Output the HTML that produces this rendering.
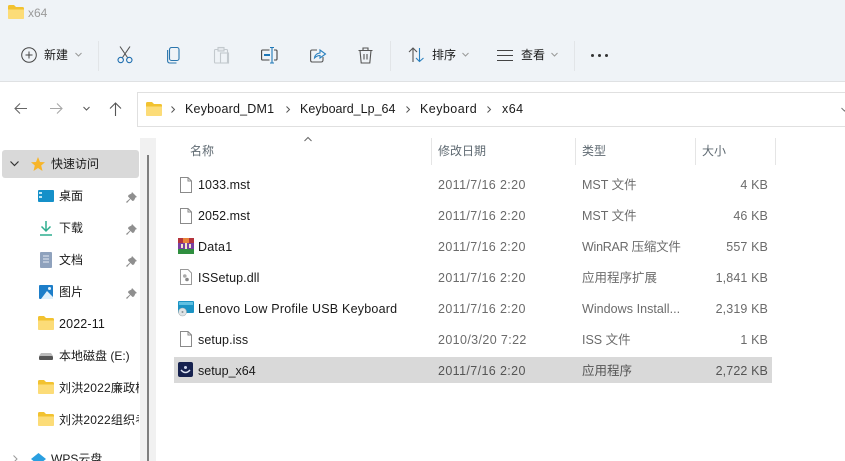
<!DOCTYPE html>
<html><head><meta charset="utf-8">
<style>
html,body{margin:0;padding:0;width:845px;height:461px;overflow:hidden;background:#fff}
body{position:relative;font-family:"Liberation Sans","Noto Sans CJK SC",sans-serif;font-size:12.5px;color:#1a1a1a}
.a{position:absolute;white-space:nowrap;line-height:16px}
svg{position:absolute;overflow:visible}
.g{color:#6b6b6b}
.h{color:#5f6a72}
.t{letter-spacing:.38px}
.s{letter-spacing:.12px}
</style></head><body>
<div class="a" style="left:0;top:0;width:845px;height:81px;background:#eff3f7;border-bottom:1px solid #dfe1e3"></div>
<svg style="left:0;top:0" width="0" height="0"><defs>
<g id="f"><path d="M0 1.500Q0 0 1.500 0H6L8 2H14.500Q16 2 16 3.500V12.500Q16 14 14.500 14H1.500Q0 14 0 12.500Z" fill="#f2c230"/><path d="M0 4.500H16V12.500Q16 14 14.500 14H1.500Q0 14 0 12.500Z" fill="#fcdc78"/></g>
<g id="d"><path d="M.5 .5H8L11.500 4V15.500H.5Z" fill="#fff" stroke="#8a8a8a"/><path d="M8 .5V4H11.500" fill="none" stroke="#8a8a8a"/></g>
<path id="p" d="M6 0L11 5L9.500 5.500L8 8.500L6.500 9L4.500 7L1 11L0 10L4 6.500L2 4.500L2.500 3L5.500 1.500Z" fill="#8f8f8f"/>
</defs></svg>
<svg style="left:8px;top:5px" width="16" height="14"><use href="#f"/></svg>
<div class="a" style="left:28px;top:5px;color:#9a9a9a;font-size:12px">x64</div>

<svg style="left:21px;top:47px" width="16" height="16" fill="none" stroke="#444"><circle cx="8" cy="8" r="7.300"/><path d="M8 4.500V11.500M4.500 8H11.500"/></svg>
<div class="a" style="left:44px;top:47px;font-size:12px">新建</div>
<svg style="left:75px;top:52px" width="7" height="5" fill="none" stroke="#999"><path d="M.5 1L3.500 4L6.500 1"/></svg>
<div class="a" style="left:98px;top:41px;width:1px;height:30px;background:#e2e5e8"></div>

<svg style="left:117px;top:46px" width="16" height="18" fill="none" stroke-width="1.100"><path d="M3 .5L10.500 11.500M13 .5L5.500 11.500" stroke="#555"/><circle cx="3.700" cy="14" r="2.700" stroke="#1f6fb0"/><circle cx="12.300" cy="14" r="2.700" stroke="#1f6fb0"/></svg>
<svg style="left:167px;top:47px" width="13" height="17" fill="none" stroke="#2a75ad" stroke-width="1.100"><rect x="2.500" y=".5" width="9.500" height="13" rx="2"/><path d="M.6 3V13.500Q.6 16 3 16H9.500"/></svg>
<svg style="left:214px;top:47px" width="15" height="17" fill="none" stroke="#c3c9ce" stroke-width="1.100"><rect x=".5" y="2.500" width="13" height="13.500" rx="1"/><rect x="4" y=".5" width="6" height="3.500" fill="#e4e8ec"/><rect x="6.500" y="6" width="8" height="10"/></svg>
<svg style="left:261px;top:47px" width="17" height="17" fill="none" stroke-width="1.100"><path d="M8.500 3H1.500Q.6 3 .6 4V12Q.6 13 1.500 13H8.500M13 3H15Q16 3 16 4V12Q16 13 15 13H13" stroke="#444"/><path d="M9 .5H13M11 .5V16M9 16H13" stroke="#1f78b8"/><rect x="3" y="7" width="6" height="2" fill="#1f78b8"/></svg>
<svg style="left:310px;top:47px" width="16" height="16" fill="none" stroke-width="1.100"><path d="M7 3H2Q.6 3 .6 4.500V13Q.6 15 2 15H11Q13 15 13 13V10" stroke="#555"/><path d="M4.500 11Q5 6.500 10 6V3L15.500 7L10 11V8.500Q7 8.500 4.500 11Z" stroke="#2a80bf"/></svg>
<svg style="left:358px;top:47px" width="15" height="17" fill="none" stroke="#555" stroke-width="1.100"><path d="M.5 3.500H14.500M5 3.500V1H10V3.500M2 3.500L3.200 16H11.800L13 3.500M6 7V12.500M9 7V12.500"/></svg>
<div class="a" style="left:390px;top:41px;width:1px;height:30px;background:#e2e5e8"></div>

<svg style="left:408px;top:47px" width="17" height="16" fill="none" stroke-width="1.100"><path d="M5 15V1.500M1 5L5 1L9 5" stroke="#555"/><path d="M11.500 1V14.500M8 11L11.500 14.500L15.500 11" stroke="#2a80bf"/></svg>
<div class="a" style="left:432px;top:47px;font-size:12px">排序</div>
<svg style="left:462px;top:52px" width="7" height="5" fill="none" stroke="#999"><path d="M.5 1L3.500 4L6.500 1"/></svg>
<svg style="left:497px;top:50px" width="16" height="11" fill="none" stroke="#444"><path d="M0 .5H16M0 5.500H16M0 10.500H16"/></svg>
<div class="a" style="left:521px;top:47px;font-size:12px">查看</div>
<svg style="left:551px;top:52px" width="7" height="5" fill="none" stroke="#999"><path d="M.5 1L3.500 4L6.500 1"/></svg>
<div class="a" style="left:574px;top:41px;width:1px;height:30px;background:#e2e5e8"></div>
<svg style="left:591px;top:54px" width="17" height="3" fill="#333"><circle cx="1.500" cy="1.500" r="1.500"/><circle cx="8.500" cy="1.500" r="1.500"/><circle cx="15.500" cy="1.500" r="1.500"/></svg>

<svg style="left:14px;top:102px" width="14" height="13" fill="none" stroke="#666" stroke-width="1.100"><path d="M13 6.500H1M6 1.500L1 6.500L6 11.500"/></svg>
<svg style="left:49px;top:102px" width="14" height="13" fill="none" stroke="#a8a8a8" stroke-width="1.100"><path d="M1 6.500H13M8 1.500L13 6.500L8 11.500"/></svg>
<svg style="left:83px;top:106px" width="7" height="5" fill="none" stroke="#555"><path d="M.5 1L3.500 4L6.500 1"/></svg>
<svg style="left:109px;top:102px" width="13" height="14" fill="none" stroke="#555" stroke-width="1.100"><path d="M6.500 14V1M1 6.500L6.500 1L12 6.500"/></svg>
<div class="a" style="left:137px;top:92px;width:720px;height:33px;border:1px solid #e0e0e0;background:#fff"></div>
<svg style="left:146px;top:102px" width="16" height="14"><use href="#f"/></svg>
<svg style="left:171px;top:106px" width="4" height="7" fill="none" stroke="#555"><path d="M.5 .5L3.500 3.500L.5 6.500"/></svg>
<div class="a" style="left:185px;top:101px;letter-spacing:.2px">Keyboard_DM1</div>
<svg style="left:286px;top:106px" width="4" height="7" fill="none" stroke="#555"><path d="M.5 .5L3.500 3.500L.5 6.500"/></svg>
<div class="a" style="left:300px;top:101px;letter-spacing:.02px">Keyboard_Lp_64</div>
<svg style="left:406px;top:106px" width="4" height="7" fill="none" stroke="#555"><path d="M.5 .5L3.500 3.500L.5 6.500"/></svg>
<div class="a" style="left:420px;top:101px;letter-spacing:.45px">Keyboard</div>
<svg style="left:487px;top:106px" width="4" height="7" fill="none" stroke="#555"><path d="M.5 .5L3.500 3.500L.5 6.500"/></svg>
<div class="a" style="left:502px;top:101px;letter-spacing:.45px">x64</div>
<svg style="left:841px;top:107px" width="7" height="5" fill="none" stroke="#777"><path d="M.5 1L3.500 4L6.500 1"/></svg>

<div class="a" style="left:2px;top:150px;width:137px;height:28px;background:#d9d9d9;border-radius:3px"></div>
<div class="a" style="left:140px;top:138px;width:16px;height:323px;background:#f1f1f1"></div>
<div class="a" style="left:147px;top:155px;width:2px;height:306px;background:#7f7f7f"></div>
<svg style="left:10px;top:161px" width="9" height="6" fill="none" stroke="#333" stroke-width="1.200"><path d="M.5 .5L4.500 4.500L8.500 .5"/></svg>
<svg style="left:31px;top:157px" width="14" height="14"><path d="M7 0L9 5L14 5.300L10.200 8.500L11.500 14L7 11L2.500 14L3.800 8.500L0 5.300L5 5Z" fill="#f7b52a"/></svg>
<div class="a" style="left:51px;top:156px;font-size:12px">快速访问</div>

<svg style="left:38px;top:190px" width="16" height="12"><rect width="16" height="12" rx="1" fill="#1590c9"/><rect x="1" y="2" width="3" height="2" fill="#bfe6f5"/><rect x="1" y="6" width="3" height="2" fill="#bfe6f5"/></svg>
<div class="a" style="left:59px;top:188px;font-size:12px">桌面</div>
<svg style="left:126px;top:192px" width="11" height="11"><use href="#p"/></svg>
<svg style="left:40px;top:221px" width="12" height="15" fill="none" stroke="#2fae8f" stroke-width="1.500"><path d="M6 0V10M1.500 5.500L6 10L10.500 5.500M0 14H12"/></svg>
<div class="a" style="left:59px;top:220px;font-size:12px">下载</div>
<svg style="left:126px;top:224px" width="11" height="11"><use href="#p"/></svg>
<svg style="left:40px;top:252px" width="12" height="16"><rect width="12" height="16" rx="1" fill="#8fa2bd"/><path d="M3 4H9M3 7H9M3 10H9" stroke="#e6ebf2"/></svg>
<div class="a" style="left:59px;top:252px;font-size:12px">文档</div>
<svg style="left:126px;top:256px" width="11" height="11"><use href="#p"/></svg>
<svg style="left:39px;top:285px" width="14" height="14"><rect width="14" height="14" rx="1" fill="#1d7ec9"/><path d="M2 14L8 6L14 12V14Z" fill="#dff0fb"/><circle cx="10.500" cy="3.500" r="1.500" fill="#eaf6fd"/></svg>
<div class="a" style="left:59px;top:284px;font-size:12px">图片</div>
<svg style="left:126px;top:288px" width="11" height="11"><use href="#p"/></svg>
<svg style="left:38px;top:316px" width="16" height="14"><use href="#f"/></svg>
<div class="a" style="left:59px;top:316px;letter-spacing:.15px">2022-11</div>
<svg style="left:39px;top:353px" width="14" height="7"><path d="M2 0H12L14 3H0Z" fill="#bbb"/><rect y="3" width="14" height="4" rx="1" fill="#555"/></svg>
<div class="a" style="left:59px;top:348px;font-size:12px">本地磁盘 (E:)</div>
<svg style="left:38px;top:380px" width="16" height="14"><use href="#f"/></svg>
<div class="a" style="left:59px;top:380px;width:80px;overflow:hidden;font-size:12px;letter-spacing:.2px">刘洪2022廉政植</div>
<svg style="left:38px;top:412px" width="16" height="14"><use href="#f"/></svg>
<div class="a" style="left:59px;top:412px;width:80px;overflow:hidden;font-size:12px;letter-spacing:.2px">刘洪2022组织考</div>
<svg style="left:13px;top:455px" width="5" height="8" fill="none" stroke="#999"><path d="M.5 .5L4 4L.5 7.500"/></svg>
<svg style="left:31px;top:453px" width="15" height="10"><path d="M7.500 0L15 6L7.500 12L0 6Z" fill="#2a9fe0"/></svg>
<div class="a" style="left:51px;top:451px;font-size:12px">WPS云盘</div>

<svg style="left:304px;top:137px" width="8" height="5" fill="none" stroke="#666"><path d="M.5 4L4 .5L7.500 4"/></svg>
<div class="a h" style="left:190px;top:143px;font-size:12px">名称</div>
<div class="a" style="left:431px;top:138px;width:1px;height:27px;background:#e5e5e5"></div>
<div class="a h" style="left:438px;top:143px;font-size:12px">修改日期</div>
<div class="a" style="left:575px;top:138px;width:1px;height:27px;background:#e5e5e5"></div>
<div class="a h" style="left:582px;top:143px;font-size:12px">类型</div>
<div class="a" style="left:695px;top:138px;width:1px;height:27px;background:#e5e5e5"></div>
<div class="a h" style="left:702px;top:143px;font-size:12px">大小</div>
<div class="a" style="left:775px;top:138px;width:1px;height:27px;background:#e5e5e5"></div>

<div class="a" style="left:174px;top:357px;width:598px;height:26px;background:#d9d9d9"></div>

<svg style="left:180px;top:177px" width="12" height="16"><use href="#d"/></svg>
<div class="a" style="left:198px;top:177px;letter-spacing:.08px">1033.mst</div>
<div class="a g t" style="left:438px;top:177px">2011/7/16 2:20</div>
<div class="a g" style="left:582px;top:177px">MST 文件</div>
<div class="a g s" style="left:668px;top:177px;width:100px;text-align:right">4 KB</div>

<svg style="left:180px;top:208px" width="12" height="16"><use href="#d"/></svg>
<div class="a" style="left:198px;top:208px;letter-spacing:.08px">2052.mst</div>
<div class="a g t" style="left:438px;top:208px">2011/7/16 2:20</div>
<div class="a g" style="left:582px;top:208px">MST 文件</div>
<div class="a g s" style="left:668px;top:208px;width:100px;text-align:right">46 KB</div>

<svg style="left:178px;top:238px" width="16" height="16"><rect width="16" height="16" fill="#7a3fa0"/><rect width="16" height="5" fill="#b5343c"/><rect x="5" width="6" height="5" fill="#e8843a"/><rect y="11" width="16" height="5" fill="#2f8f3f"/><rect x="7" y="5" width="2" height="6" fill="#f2e8c8"/><rect x="3" y="6" width="2" height="4" fill="#f2e8c8"/><rect x="11" y="6" width="2" height="4" fill="#f2e8c8"/></svg>
<div class="a" style="left:198px;top:239px;letter-spacing:.2px">Data1</div>
<div class="a g t" style="left:438px;top:239px">2011/7/16 2:20</div>
<div class="a g" style="left:582px;top:239px;letter-spacing:-.25px">WinRAR 压缩文件</div>
<div class="a g s" style="left:668px;top:239px;width:100px;text-align:right">557 KB</div>

<svg style="left:180px;top:269px" width="12" height="16"><path d="M.5 .5H8L11.500 4V15.500H.5Z" fill="#fff" stroke="#999"/><circle cx="4.800" cy="7" r="1.800" fill="#aaa"/><circle cx="7" cy="10.500" r="1.800" fill="#888"/></svg>
<div class="a" style="left:198px;top:270px;letter-spacing:.1px">ISSetup.dll</div>
<div class="a g t" style="left:438px;top:270px">2011/7/16 2:20</div>
<div class="a g" style="left:582px;top:270px">应用程序扩展</div>
<div class="a g s" style="left:668px;top:270px;width:100px;text-align:right">1,841 KB</div>

<svg style="left:178px;top:301px" width="16" height="15"><rect width="16" height="12" rx="1" fill="#1b93c4"/><rect x="1" y="1" width="14" height="3" fill="#5fc0e2"/><circle cx="4.500" cy="11" r="4" fill="#dfe4e6" stroke="#a9b2b6" stroke-width=".6"/><circle cx="4.500" cy="11" r="1" fill="#8a9499"/></svg>
<div class="a" style="left:198px;top:301px;letter-spacing:.22px">Lenovo Low Profile USB Keyboard</div>
<div class="a g t" style="left:438px;top:301px">2011/7/16 2:20</div>
<div class="a g" style="left:582px;top:301px;letter-spacing:.05px">Windows Install...</div>
<div class="a g s" style="left:668px;top:301px;width:100px;text-align:right">2,319 KB</div>

<svg style="left:180px;top:331px" width="12" height="16"><use href="#d"/></svg>
<div class="a" style="left:198px;top:332px;letter-spacing:.1px">setup.iss</div>
<div class="a g t" style="left:438px;top:332px">2010/3/20 7:22</div>
<div class="a g" style="left:582px;top:332px">ISS 文件</div>
<div class="a g s" style="left:668px;top:332px;width:100px;text-align:right">1 KB</div>

<svg style="left:178px;top:362px" width="15" height="15"><rect width="15" height="15" rx="2" fill="#16224f"/><path d="M3 8Q7.500 13 12 8" fill="none" stroke="#dfe6f5" stroke-width="1.500"/><circle cx="7.500" cy="5.500" r="1.500" fill="#cfd8ee"/></svg>
<div class="a" style="left:198px;top:363px">setup_x64</div>
<div class="a g t" style="left:438px;top:363px;color:#555">2011/7/16 2:20</div>
<div class="a g" style="left:582px;top:363px;color:#555">应用程序</div>
<div class="a g s" style="left:668px;top:363px;width:100px;text-align:right;color:#555">2,722 KB</div>
</body></html>
